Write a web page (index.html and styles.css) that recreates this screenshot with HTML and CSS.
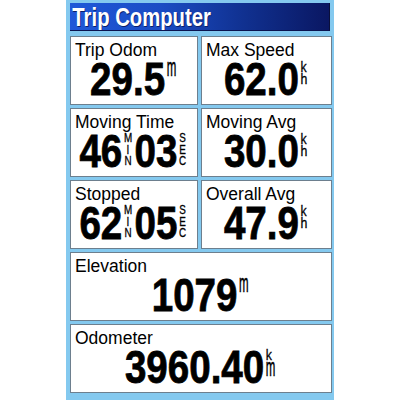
FILE: index.html
```html
<!DOCTYPE html>
<html lang="en">
<head>
    <meta charset="UTF-8">
    <meta name="viewport" content="width=device-width, initial-scale=1.0">
    <title>Trip Computer</title>
    <link rel="stylesheet" href="styles.css">
</head>
<body>

    <div id="screen">

        <div id="title"><span>Trip Computer</span></div>

        <div id="fields">

            <div class="cell">
                <div class="label">Trip Odom</div>
                <div class="value">29.5<span class="u"><span class="tm">m</span></span></div>
            </div>

            <div class="cell">
                <div class="label">Max Speed</div>
                <div class="value">62.0<span class="u"><span>k</span><span>h</span></span></div>
            </div>

            <div class="cell">
                <div class="label">Moving Time</div>
                <div class="value">46<span class="u s"><span>M</span><span>I</span><span>N</span></span>03<span class="u s"><span>S</span><span>E</span><span>C</span></span></div>
            </div>

            <div class="cell">
                <div class="label">Moving Avg</div>
                <div class="value">30.0<span class="u"><span>k</span><span>h</span></span></div>
            </div>

            <div class="cell">
                <div class="label">Stopped</div>
                <div class="value">62<span class="u s"><span>M</span><span>I</span><span>N</span></span>05<span class="u s"><span>S</span><span>E</span><span>C</span></span></div>
            </div>

            <div class="cell">
                <div class="label">Overall Avg</div>
                <div class="value">47.9<span class="u"><span>k</span><span>h</span></span></div>
            </div>

            <div class="cell wide">
                <div class="label">Elevation</div>
                <div class="value">1079<span class="u"><span class="tm">m</span></span></div>
            </div>

            <div class="cell wide">
                <div class="label">Odometer</div>
                <div class="value">3960.40<span class="u"><span>k</span><span class="tm">m</span></span></div>
            </div>

        </div>

    </div>

</body>
</html>
```

FILE: styles.css
```css
body {
    margin: 0;
    background: #fff;
}

#screen {
    width: 268px;
    height: 400px;
    margin: 0 auto;
    padding: 3px 2px 0 4px;
    box-sizing: border-box;
    background: #84c9ef;
}

#title {
    width: 260px;
    height: 28px;
    box-sizing: border-box;
    background: linear-gradient(90deg, #1f58d8 0%, #1a4cc4 35%, #10308f 68%, #0a1762 100%);
    border-right: 1px solid #0a0f3a;
    border-bottom: 1px solid #0a1450;
    overflow: hidden;
}

#title > span {
    display: inline-block;
    padding-left: 3px;
    color: #fff;
    font: bold 26px/28px "Liberation Sans", Arial, sans-serif;
    text-shadow: 1px 1px 0 #0b1f6a;
    white-space: nowrap;
    transform: scaleX(.78);
    transform-origin: left center;
}

#fields {
    margin-top: 5px;
    display: grid;
    grid-template-columns: 128px 131px;
    grid-auto-rows: 69px;
    gap: 3px;
}

.cell {
    background: #fff;
    border: 1px solid #6d7f8e;
    box-sizing: border-box;
    padding: 3px 4px 0 4px;
    overflow: hidden;
}

.wide {
    grid-column: span 2;
}

.label {
    font: 17.5px/20px "Liberation Sans", Arial, sans-serif;
    color: #000;
    white-space: nowrap;
}

.value {
    margin-top: 1px;
    display: flex;
    justify-content: center;
    align-items: flex-start;
    font: bold 47px/36px "Liberation Sans", Arial, sans-serif;
    color: #000;
    -webkit-text-stroke: .8px #000;
    white-space: nowrap;
    transform: scaleX(.82);
}

/* small stacked units next to the number */
.u {
    display: flex;
    flex-direction: column;
    margin: 0 2px 0 2px;
    font: 15px/12px "Liberation Sans", Arial, sans-serif;
    color: #000;
    -webkit-text-stroke: .3px #000;
}

.u.s {
    font-size: 12px;
    line-height: 11.5px;
    align-items: center;
    margin: 0 3px 0 2px;
}

.tm {
    display: block;
    font-size: 14px;
    line-height: 6px;
    transform: scaleY(1.9);
    transform-origin: top;
}
```
